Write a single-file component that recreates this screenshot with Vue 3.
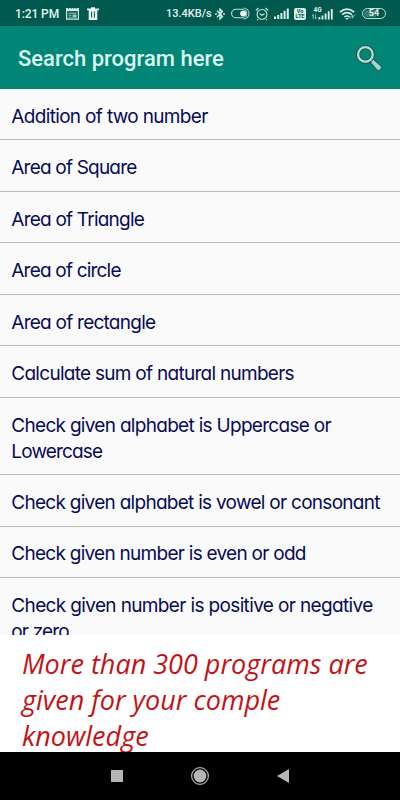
<template>
  <div class="screen">
    <header class="status-bar">
      <span class="time">1:21 PM</span>
      <svg class="icon-calendar" width="13" height="13" viewBox="0 0 13 13">
        <path d="M.6 1.6h11.8v10.6H.6z" fill="none" stroke="#d5eae5" stroke-width="1.2" />
        <path d="M.5 1.5h12v2.6H.5z" fill="#d5eae5" />
        <path d="M2.5 0v2M5.1 0v2M7.7 0v2M10.3 0v2" stroke="#00594e" stroke-width=".8" />
        <path d="M2.5 6.2h8M2.5 8.2h3M2.5 10.2h3" stroke="#b8d8d0" stroke-width=".9" />
        <path d="M6.5 7.5h4v3.2h-4z" fill="#a5c9c0" />
      </svg>
      <svg class="icon-trash" width="12" height="13" viewBox="0 0 12 13">
        <path d="M0 1.5h4V.2h4v1.3h4v1.7H0z" fill="#e9f6f3" />
        <path d="M1.7 3h8.6v10H1.7z" fill="#e9f6f3" />
        <path d="M4.6 4.5v6.2M7.4 4.5v6.2" stroke="#00594e" stroke-width="1" />
      </svg>

      <span class="speed">13.4KB/s</span>
      <svg class="icon-bluetooth" width="10" height="14" viewBox="0 0 10 14">
        <path d="M2 3.8 7.5 9.5 5 12V2l2.5 2.5L2 10.2" fill="none" stroke="#dff1ed" stroke-width="1.3" />
        <circle cx="1" cy="7" r=".9" fill="#dff1ed" />
        <circle cx="9" cy="7" r=".9" fill="#dff1ed" />
      </svg>
      <svg class="icon-toggle" width="20" height="13" viewBox="0 0 20 13">
        <path d="M13 10.7H4.8a4.2 4.2 0 0 1 0-8.4H13" fill="none" stroke="#c4dfd9" stroke-width="1.1" />
        <circle cx="12.2" cy="6.5" r="3" fill="#e9f6f3" />
        <path d="M12.5 1a5.5 5.5 0 0 1 0 11M13.5 3a3.8 3.8 0 0 1 0 7" fill="none" stroke="#a8cec5" stroke-width="1.1" />
      </svg>
      <svg class="icon-alarm" width="14" height="14" viewBox="0 0 14 14">
        <circle cx="7" cy="7.4" r="4.9" fill="none" stroke="#cfe6e1" stroke-width="1.1" />
        <path d="M.8 3.5 3.5 1M13.2 3.5 10.5 1M4.7 6.7 7 8.3l2.5-1.5M3 12.2l-1 1M11 12.2l1 1" fill="none" stroke="#cfe6e1" stroke-width="1.1" />
      </svg>
      <svg class="icon-signal" width="15" height="11" viewBox="0 0 15 11">
        <path d="M0 11V8.5h2V11zM3.2 11V7h2v4zM6.4 11V5h2v6zM9.6 11V2.8h2V11zM12.8 11V.5h2V11z" fill="#dff1ed" />
      </svg>
      <span class="volte"><b>Vo</b><b>LTE</b></span>
      <svg class="icon-network" width="21" height="14" viewBox="0 0 21 14">
        <text x="1.5" y="5" font-size="6.5" font-weight="700" fill="#dff1ed">4G</text>
        <path d="M1.2 12V7.5M0 9l1.2-1.5M3.5 7.5V12l1.2-1.5" fill="none" stroke="#b8d8d0" stroke-width=".8" />
        <path d="M6.5 12.5V10h1.8v2.5zM9.6 12.5V8.5h1.8v4zM12.7 12.5V6.5h1.8v6zM15.8 12.5V4.3h1.8v8.2zM18.9 12.5V2h1.8v10.5z" fill="#dff1ed" />
      </svg>
      <svg class="icon-wifi" width="17" height="14" viewBox="0 0 17 14">
        <path d="M.8 5.2q7.2-6 14.4 0M3.1 7.7q4.9-4 9.8 0M5.4 10q2.6-2 5.2 0" fill="none" stroke="#d6ebe6" stroke-width="1.7" />
        <path d="M6.4 11 8 13 9.6 11z" fill="#d6ebe6" />
        <path d="m10.5 11.5 3-3.5v3M16 7.5l-3 4" fill="none" stroke="#8fbdb3" stroke-width="1" />
      </svg>
      <span class="battery"><i></i><b>54</b></span>
    </header>

    <div class="toolbar">
      <h1>Search program here</h1>
      <svg width="28" height="28" viewBox="0 0 28 28">
        <path d="m14.6 16.6 2.7-2.4 8 7.2q.8.9 0 1.9l-2 2.1q-.9.8-1.8 0l-6.3-7.1z" fill="#a3d3ca" stroke="#174c44" stroke-width="1" />
        <circle cx="9.4" cy="9.4" r="7.3" fill="none" stroke="#174c44" stroke-width="3.9" />
        <circle cx="9.4" cy="9.4" r="7.3" fill="none" stroke="#b7ddd6" stroke-width="2.4" />
      </svg>
    </div>

    <ul class="programs">
      <li v-for="(program, i) in programs" :key="i">
        <span
          v-for="line in program"
          :key="line.text"
          class="line"
          :style="{ letterSpacing: line.spacing + 'px' }"
        >{{ line.text }}</span>
      </li>
    </ul>

    <div class="banner">
      <span v-for="line in banner" :key="line" class="line">{{ line }}</span>
    </div>

    <nav class="nav-bar">
      <svg width="14" height="14" viewBox="0 0 14 14"><path d="M1 1h12v12H1z" fill="#b5b5b5" /></svg>
      <svg width="20" height="20" viewBox="0 0 20 20">
        <circle cx="10" cy="10" r="8.4" fill="none" stroke="#b5b5b5" stroke-width="1.2" />
        <circle cx="10" cy="10" r="6.4" fill="#b5b5b5" />
      </svg>
      <svg width="14" height="16" viewBox="0 0 14 16"><path d="M13 1v14L1 8z" fill="#b5b5b5" /></svg>
    </nav>
  </div>
</template>

<script setup>
const programs = [
  [{ text: 'Addition of two number', spacing: -0.66 }],
  [{ text: 'Area of Square', spacing: -0.8 }],
  [{ text: 'Area of Triangle', spacing: -0.78 }],
  [{ text: 'Area of circle', spacing: -0.8 }],
  [{ text: 'Area of rectangle', spacing: -0.75 }],
  [{ text: 'Calculate sum of natural numbers', spacing: -0.72 }],
  [
    { text: 'Check given alphabet is Uppercase or', spacing: -0.7 },
    { text: 'Lowercase', spacing: -0.85 }
  ],
  [{ text: 'Check given alphabet is vowel or consonant', spacing: -0.72 }],
  [{ text: 'Check given number is even or odd', spacing: -0.73 }],
  [
    { text: 'Check given number is positive or negative', spacing: -0.64 },
    { text: 'or zero', spacing: -0.85 }
  ]
]

const banner = ['More than 300 programs are', 'given for your comple', 'knowledge']
</script>

<style>
body {
  background: #fff;
}
</style>

<style scoped>
.screen {
  display: flex;
  flex-direction: column;
  width: 400px;
  height: 800px;
  overflow: hidden;
  background: #fff;
  font-family: Roboto, sans-serif;
}

svg {
  display: block;
  flex: none;
}

.status-bar {
  display: flex;
  align-items: center;
  flex: none;
  height: 26px;
  box-sizing: border-box;
  padding: 1px 14px 0 15px;
  background: #00594e;
  color: #e3f4f0;
  white-space: nowrap;
}

.time {
  width: 51px;
  font-size: 12px;
  font-weight: 500;
  letter-spacing: -0.1px;
}

.icon-trash {
  margin-left: 8px;
}

.speed {
  width: 46px;
  margin-left: 67px;
  font-size: 11px;
  font-weight: 500;
}

.icon-bluetooth {
  margin-left: 3px;
}

.icon-toggle {
  margin-left: 6px;
}

.icon-alarm {
  margin-left: 4px;
}

.icon-signal {
  margin-left: 5px;
}

.volte {
  display: flex;
  flex-direction: column;
  flex: none;
  align-items: center;
  justify-content: center;
  width: 12px;
  height: 12px;
  margin-left: 5px;
  border-radius: 2px;
  background: #dff1ed;
  color: #00594e;
  font-size: 5.5px;
  line-height: 5px;
}

.icon-network {
  margin-left: 6px;
}

.icon-wifi {
  margin-left: 6px;
}

.battery {
  position: relative;
  display: flex;
  flex: none;
  align-items: center;
  justify-content: center;
  width: 24px;
  height: 11px;
  box-sizing: border-box;
  margin-left: 6px;
  border: 1px solid #c4dfd9;
  border-radius: 6px;
  font-size: 9px;
  line-height: 9px;
}

/* charge level behind the number */
.battery i {
  position: absolute;
  inset: 1px 9px 1px 1px;
  border-radius: 4px 0 0 4px;
  background: #367b71;
}

.battery b {
  position: relative;
}

.toolbar {
  display: flex;
  align-items: center;
  justify-content: space-between;
  flex: none;
  height: 63px;
  box-sizing: border-box;
  padding: 2px 16px 0 18px;
  background: #018577;
}

.toolbar h1 {
  margin: 0;
  color: #dcf5ef;
  font-size: 22px;
  font-weight: 500;
}

.programs {
  flex: none;
  height: 546px;
  margin: 0;
  padding: 0;
  overflow: hidden;
  list-style: none;
  background: #fafafa;
  color: #080b57;
  font-family: Inter, sans-serif;
  font-feature-settings: 'cv11';
  font-size: 19px;
  line-height: 25.8px;
}

.programs li {
  padding: 14.8px 12px 9.9px 11.3px;
  border-bottom: 1px solid #bcbcbc;
}

.line {
  display: block;
  width: max-content;
  white-space: nowrap;
}

.banner {
  flex: none;
  height: 117px;
  box-sizing: border-box;
  padding: 11px 22px 0;
  overflow: hidden;
  color: #c41317;
  font-family: 'Open Sans', sans-serif;
  font-size: 27px;
  font-style: italic;
  line-height: 36px;
}

.nav-bar {
  display: flex;
  align-items: center;
  justify-content: center;
  gap: 66px;
  flex: 1;
  background: #000;
}
</style>
